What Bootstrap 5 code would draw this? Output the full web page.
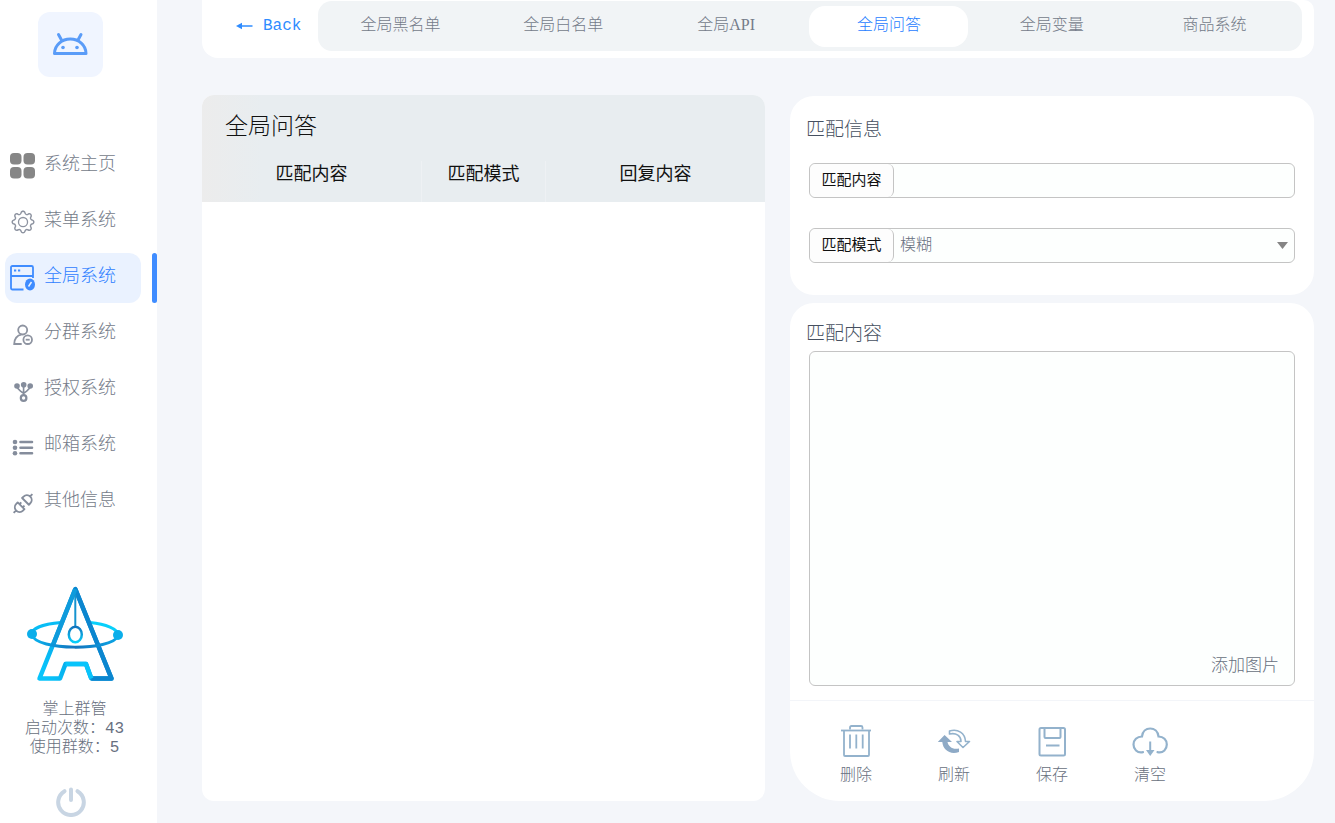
<!DOCTYPE html>
<html lang="zh-CN">
<head>
<meta charset="utf-8">
<meta name="viewport" content="width=device-width, initial-scale=1">
<title>全局问答</title>
<link href="https://cdn.jsdelivr.net/npm/bootstrap@5.3.0/dist/css/bootstrap.min.css" rel="stylesheet">
<style>
  body { background: #f4f6fa; color: #687080; font-family: "Liberation Serif", "Noto Sans CJK SC", sans-serif; font-size: 16px; font-weight: 300; }
  button, input, select, textarea { font-family: inherit; font-weight: inherit; }

  /* Sidebar */
  .side { width: 157px; background: #fff; padding: 12px 21px 6px 5px; position: relative; }
  .side-home { width: 65px; height: 65px; border-radius: 12px; background: #f0f5ff; }
  .side-nav { margin: 64px -5px 0 0; gap: 6px; }
  .side-link { height: 50px; padding: 0 4px; gap: 9px; border-radius: 12px; font-size: 18px; color: #747b89; text-decoration: none; }
  .side-link span { padding-bottom: 3px; }
  .side-link.active { background: #eaf2ff; color: #2f80ff; position: relative; }
  .side-link.active::after { content: ""; position: absolute; left: 147px; top: 0; width: 5px; height: 50px; border-radius: 3px; background: #3f8cff; }
  .side-stats { line-height: 19px; margin: 16px 0 29px; white-space: nowrap; font-family: "Liberation Mono", "Noto Sans CJK SC", monospace; }
  .plain-btn { border: 0; background: none; padding: 0; color: inherit; }

  /* Top bar */
  .main-area { padding: 0 21px 22px 45px; min-width: 0; }
  .top-bar { background: #fff; height: 58px; border-radius: 0 10px 16px 16px; padding: 1px 12px 7px 34px; }
  .back-btn { width: 82px; gap: 10px; color: #2f8cff; font: 400 16px "Liberation Mono", monospace; }
  .tab-strip { background: #f1f4f6; border-radius: 14px; padding: 5px 8px 4px 3px; gap: 4px; }
  .tab-strip .nav-link { color: #747b89; border-radius: 16px; padding: 0 0 4px; }
  .tab-strip .nav-link.active { background: #fff; color: #1f80ff; }

  /* Panels */
  .panels { display: grid; grid-template-columns: 563fr 524fr; gap: 25px; margin-top: 37px; }
  .list-panel { background: #fff; border-radius: 12px; overflow: hidden; }
  .list-head { background: linear-gradient(90deg, #ececec, #e8edf0 60px); color: #111; }
  .list-title { font-size: 23px; line-height: 30px; font-weight: 300; margin: 0; padding: 17px 23px 19px; }
  .list-head table { table-layout: fixed; font-size: 18px; line-height: 26px; color: #111; }
  .list-head th { font-weight: 400; text-align: center; padding: 0 0 15px; }
  .list-head th + th { border-left: 1px solid #eef1f4; }
  .panel-box { background: #fff; border-radius: 24px; }
  .panel-match { padding: 20px 19px 32px; }
  .panel-reply { padding-top: 17px; border-radius: 24px 24px 50px 50px; }
  .panel-title { font-size: 19px; line-height: 27px; font-weight: 300; color: #465060; margin: 0 0 0 -3px; }
  .panel-reply .panel-title { margin-left: 16px; }
  .field { height: 35px; border: 1px solid #c4c4c4; border-radius: 6px; background: #fdfffe; overflow: hidden; }
  .field-label { width: 84px; border-right: 1px solid #c4c4c4; border-radius: 6px; background: #fdfdfd; color: #111; font-size: 15px; font-weight: 400; }
  .field .form-control, .field .form-select { border: 0; border-radius: 0; padding: 0 6px 2px; font-size: 16px; font-weight: 300; color: #687080; background-color: transparent; box-shadow: none; min-width: 0; }
  .field .form-select { background-image: url("data:image/svg+xml,%3Csvg xmlns='http://www.w3.org/2000/svg' viewBox='0 0 11 7'%3E%3Cpath d='M0 0h11L5.5 7z' fill='%23858585'/%3E%3C/svg%3E"); background-size: 11px 7px; background-position: right 6px center; }
  .reply-wrap { margin: 4px 19px 14px; position: relative; }
  .reply-wrap textarea { resize: none; border: 1px solid #c4c4c4; border-radius: 6px; background: #fdfffe; }
  .add-image { position: absolute; right: 16px; bottom: 7px; font-size: 17px; line-height: 26px; }
  .tool-row { height: 101px; border-top: 1px solid #f3f5f9; padding: 22px 17px 0; }
  .tool-btn { width: 98px; line-height: 22px; }
  .tool-btn svg { display: block; margin: 0 auto 5px; stroke: #93b2cc; fill: none; stroke-width: 2; }
</style>
</head>
<body>
<div class="d-flex min-vh-100">
  <aside class="side d-flex flex-column flex-shrink-0">
    <a href="#" class="side-home d-block mx-auto" aria-label="首页">
      <svg width="65" height="65" viewBox="0 0 65 65" fill="none" stroke="#5a9cf8" stroke-width="3" stroke-linecap="round" stroke-linejoin="round"><path d="M16.500 41.500C16.500 33 24 27 32.300 27S48 33 48 41.500Z"/><path d="M20.500 22.500l3 5.500M43 22.500l-3 5.500"/><g fill="#5a9cf8" stroke="none"><circle cx="25" cy="35.500" r="1.800"/><circle cx="39" cy="35.500" r="1.800"/></g></svg>
    </a>
    <nav class="side-nav d-flex flex-column">
      <a href="#" class="side-link d-flex align-items-center">
        <svg width="26" height="26" viewBox="0 0 26 26" fill="#868686"><rect x="1" y="0" width="11.500" height="11.500" rx="4"/><rect x="14.500" y="0" width="11.500" height="11.500" rx="4"/><rect x="1" y="14" width="11.500" height="11.500" rx="4"/><rect x="14.500" y="14" width="11.500" height="11.500" rx="4"/></svg>
        <span>系统主页</span></a>
      <a href="#" class="side-link d-flex align-items-center">
        <svg width="26" height="26" viewBox="0 0 26 26" fill="#8d93a0"><g transform="translate(2.500 1.500) scale(1.440)"><path d="M8 4.400a3.600 3.600 0 1 0 0 7.200 3.600 3.600 0 0 0 0-7.200zM5.300 8a2.700 2.700 0 1 1 5.400 0 2.700 2.700 0 0 1-5.400 0z"/><path d="M9.796 1.343c-.527-1.790-3.065-1.790-3.592 0l-.094.319a.873.873 0 0 1-1.255.520l-.292-.160c-1.640-.892-3.433.902-2.540 2.541l.159.292a.873.873 0 0 1-.520 1.255l-.319.094c-1.790.527-1.790 3.065 0 3.592l.319.094a.873.873 0 0 1 .520 1.255l-.160.292c-.892 1.640.901 3.434 2.541 2.540l.292-.159a.873.873 0 0 1 1.255.520l.094.319c.527 1.790 3.065 1.790 3.592 0l.094-.319a.873.873 0 0 1 1.255-.520l.292.160c1.640.893 3.434-.902 2.540-2.541l-.159-.292a.873.873 0 0 1 .520-1.255l.319-.094c1.790-.527 1.790-3.065 0-3.592l-.319-.094a.873.873 0 0 1-.520-1.255l.160-.292c.893-1.640-.902-3.433-2.541-2.540l-.292.159a.873.873 0 0 1-1.255-.520l-.094-.319zm-2.633.283c.246-.835 1.428-.835 1.674 0l.094.319a1.873 1.873 0 0 0 2.693 1.115l.291-.160c.764-.415 1.600.420 1.184 1.185l-.159.292a1.873 1.873 0 0 0 1.116 2.692l.318.094c.835.246.835 1.428 0 1.674l-.319.094a1.873 1.873 0 0 0-1.115 2.693l.160.291c.415.764-.420 1.600-1.185 1.184l-.291-.159a1.873 1.873 0 0 0-2.693 1.116l-.094.318c-.246.835-1.428.835-1.674 0l-.094-.319a1.873 1.873 0 0 0-2.692-1.115l-.292.160c-.764.415-1.600-.420-1.184-1.185l.159-.291A1.873 1.873 0 0 0 1.945 8.930l-.319-.094c-.835-.246-.835-1.428 0-1.674l.319-.094A1.873 1.873 0 0 0 3.060 4.377l-.160-.292c-.415-.764.420-1.600 1.185-1.184l.292.159a1.873 1.873 0 0 0 2.692-1.115l.094-.319z"/></g></svg>
        <span>菜单系统</span></a>
      <a href="#" class="side-link active d-flex align-items-center" aria-current="page">
        <svg width="26" height="26" viewBox="0 0 26 26" fill="none" stroke="#3f8cff" stroke-width="1.800"><path d="M14.500 24.500H3.500Q2 24.500 2 23V2.500Q2 1 3.500 1H22.500Q24 1 24 2.500V13M2 11H24"/><path d="M5 5.500h2.200M9 5.500h2.200" stroke-width="2.200"/><ellipse cx="21" cy="19.500" rx="5" ry="6" fill="#3f8cff" stroke="none"/><path d="M19.500 21.500l3-4.500" stroke="#eaf2ff" stroke-width="1.500"/></svg>
        <span>全局系统</span></a>
      <a href="#" class="side-link d-flex align-items-center">
        <svg width="26" height="26" viewBox="0 0 26 26" fill="none" stroke="#8d93a0" stroke-width="1.800"><circle cx="13.700" cy="9" r="4.500"/><path d="M12.700 23H5.200C5.200 18 8 14 12.500 13.700"/><circle cx="18.700" cy="18.700" r="4.300"/><path d="M16.700 18.700h4"/></svg>
        <span>分群系统</span></a>
      <a href="#" class="side-link d-flex align-items-center">
        <svg width="26" height="26" viewBox="0 0 26 26" fill="none" stroke="#858d9c" stroke-width="1.600"><g fill="#858d9c" stroke="none"><circle cx="8" cy="9" r="2.800"/><circle cx="14.700" cy="7.800" r="2.800"/><circle cx="21.200" cy="9" r="2.800"/></g><circle cx="14.600" cy="21" r="2.800" stroke-width="2.200"/><path d="M14.600 8v10M7.700 9c1 4 3 4 6.900 7.500C18.500 13 20.500 13 21.500 9"/></svg>
        <span>授权系统</span></a>
      <a href="#" class="side-link d-flex align-items-center">
        <svg width="26" height="26" viewBox="0 0 26 26" fill="none" stroke="#858d9c" stroke-width="2.600" stroke-linecap="round"><path d="M11.500 9H23M11.500 14.700H23M11.500 20.300H23"/><g fill="#858d9c" stroke="none"><circle cx="6" cy="9" r="2.300"/><circle cx="6" cy="14.700" r="2.300"/><circle cx="6" cy="20.300" r="2.300"/></g></svg>
        <span>邮箱系统</span></a>
      <a href="#" class="side-link d-flex align-items-center">
        <svg width="26" height="26" viewBox="0 0 26 26" fill="none" stroke="#858d9c" stroke-width="1.900" stroke-linejoin="round"><g transform="translate(14.200 15) rotate(-45)"><path d="M-13-.5h4M-2.800-5h-2a4.600 4.600 0 0 0 0 9.500h2zM3.500-5h2a4.600 4.600 0 0 1 0 9.500h-2zM9.500-.5h4M-2.800-2.500h2.600M-2.800 2h2.600"/></g></svg>
        <span>其他信息</span></a>
    </nav>
    <div class="mt-auto pt-4 ps-2 text-center">
      <svg width="98" height="100" viewBox="0 0 98 100" fill="none" stroke-width="4" stroke-linejoin="round">
        <defs>
          <linearGradient id="frame" gradientUnits="userSpaceOnUse" x1="20" y1="90" x2="80" y2="60"><stop offset="0" stop-color="#08c4fb"/><stop offset="1" stop-color="#0784cf"/></linearGradient>
          <linearGradient id="orbit" gradientUnits="userSpaceOnUse" x1="5" y1="0" x2="93" y2="0"><stop offset="0" stop-color="#08b4f0"/><stop offset=".5" stop-color="#1273bd"/><stop offset="1" stop-color="#0ba6e6"/></linearGradient>
          <linearGradient id="bob" x1="0" y1="0" x2="0" y2="1"><stop offset="0" stop-color="#1273bd"/><stop offset="1" stop-color="#08d0fb"/></linearGradient>
        </defs>
        <path d="M35 37.500C18 39 6 43 6 49" stroke="#08bdf5" stroke-width="3"/>
        <path d="M64 37.500C80 39 92 44 92 50" stroke="#08d0fb" stroke-width="3"/>
        <path d="M49.300 4L13.500 93.500H34L39.500 79H60L65.300 93.500H85.500Z" stroke="url(#frame)" stroke-width="4.500"/>
        <path d="M65.300 93.500H85.500L49.300 4" stroke="#0b86cf" stroke-width="4.500"/>
        <path d="M65.300 93.500L60 79H39.500" stroke="#08c4fb" stroke-width="4.500"/>
        <path d="M49.300 4L27 60" stroke="#0e9bdc" stroke-width="4.500"/>
        <path d="M6 50C10 66 86 66 92 51" stroke="url(#orbit)" stroke-width="3"/>
        <path d="M49.300 10V41" stroke="#1593cf" stroke-width="2"/>
        <ellipse cx="49.300" cy="49.500" rx="6.500" ry="7.800" stroke="url(#bob)" stroke-width="2.500"/>
        <circle cx="6" cy="49" r="5" fill="#0baeea"/><circle cx="92" cy="50" r="5" fill="#0baeea"/>
      </svg>
      <div class="side-stats d-flex flex-column align-items-center"><span>掌上群管</span><span>启动次数：43</span><span>使用群数：5</span></div>
    </div>
    <button type="button" class="plain-btn mx-auto d-block lh-1" aria-label="退出">
      <svg class="d-block" width="30" height="30" viewBox="0 0 30 30" fill="none" stroke="#c8d5e3" stroke-width="4" stroke-linecap="round"><path d="M8.500 4.200A12.800 12.800 0 1 0 21.500 4.200M15 2.500V13"/></svg>
    </button>
  </aside>

  <main class="main-area flex-grow-1 d-flex flex-column">
    <header class="top-bar d-flex">
      <button type="button" class="plain-btn back-btn d-flex align-items-center">
        <svg width="17" height="8" viewBox="0 0 17 8"><path d="M5 4H16.500" stroke="#2f8cff" stroke-width="1.500"/><path d="M0 4L6 .8V7.200Z" fill="#2f8cff"/></svg>Back
      </button>
      <nav class="tab-strip nav nav-fill flex-grow-1 flex-nowrap align-items-stretch">
        <a class="nav-link d-flex align-items-center justify-content-center w-100" href="#">全局黑名单</a>
        <a class="nav-link d-flex align-items-center justify-content-center w-100" href="#">全局白名单</a>
        <a class="nav-link d-flex align-items-center justify-content-center w-100" href="#">全局API</a>
        <a class="nav-link active d-flex align-items-center justify-content-center w-100" href="#" aria-current="page">全局问答</a>
        <a class="nav-link d-flex align-items-center justify-content-center w-100" href="#">全局变量</a>
        <a class="nav-link d-flex align-items-center justify-content-center w-100" href="#">商品系统</a>
      </nav>
    </header>

    <div class="panels flex-grow-1">
      <section class="list-panel">
        <div class="list-head">
          <h1 class="list-title">全局问答</h1>
          <table class="w-100">
            <colgroup><col style="width:39%"><col style="width:22%"><col style="width:39%"></colgroup>
            <thead><tr><th scope="col">匹配内容</th><th scope="col">匹配模式</th><th scope="col">回复内容</th></tr></thead>
            <tbody></tbody>
          </table>
        </div>
      </section>

      <div class="d-flex flex-column gap-2" style="padding-top:1px">
        <section class="panel-box panel-match">
          <h2 class="panel-title">匹配信息</h2>
          <div class="field d-flex" style="margin-top:20px">
            <label class="field-label d-flex align-items-center justify-content-center flex-shrink-0" for="keyword">匹配内容</label>
            <input class="form-control" id="keyword" type="text">
          </div>
          <div class="field d-flex" style="margin-top:30px">
            <label class="field-label d-flex align-items-center justify-content-center flex-shrink-0" for="mode">匹配模式</label>
            <select class="form-select" id="mode"><option>模糊</option><option>精确</option></select>
          </div>
        </section>
        <section class="panel-box panel-reply flex-grow-1 d-flex flex-column">
          <h2 class="panel-title"><label for="reply">匹配内容</label></h2>
          <div class="reply-wrap flex-grow-1 d-flex">
            <textarea class="form-control" id="reply"></textarea>
            <button type="button" class="plain-btn add-image">添加图片</button>
          </div>
          <div class="tool-row d-flex align-items-start">
            <button type="button" class="plain-btn tool-btn">
              <svg width="36" height="36" viewBox="0 0 36 36"><path d="M3 7.500H33" stroke-width="1.800"/><path d="M6 7.500V32Q6 33 7 33H30Q31 33 31 32V7.500M12 6.500V4.500Q12 3 13.500 3H23Q24.500 3 24.500 4.500V6.500M12 11.500V25.500M18.300 11.500V25.500M24.700 11.500V25.500" stroke-width="1.800"/></svg>删除</button>
            <button type="button" class="plain-btn tool-btn">
              <svg width="36" height="36" viewBox="0 0 36 36"><path d="M8.600 12L16 19H11.500C12.500 23.500 16.500 27 23 25.500V29C14 32 7 27 6.300 19H1.800Z" fill="#8eaac6" stroke="none"/><path d="M13.500 8C22 5.500 29 10 29.500 18.500H33.500L27 24.500L21 18.500H25C25 13 20.500 9.500 13.500 11Z" stroke-width="1.600" stroke-linejoin="round"/></svg>刷新</button>
            <button type="button" class="plain-btn tool-btn">
              <svg width="36" height="36" viewBox="0 0 36 36"><rect x="5.500" y="5" width="25.500" height="27.500" rx="1.500"/><path d="M10.500 5V14Q10.500 15 11.500 15H25.500Q26.500 15 26.500 14V5M12 22.500H25.500"/></svg>保存</button>
            <button type="button" class="plain-btn tool-btn">
              <svg width="36" height="36" viewBox="0 0 36 36"><path d="M11 29.200C5 30.500 1.500 26 1.500 21.500C1.500 17 5 13.500 10 13.500C10.500 8.500 14 5.500 18.200 5.500S26 8.500 26.500 13.500C31.500 13.500 34.800 17 34.800 21.500C34.800 26 31.500 30.500 25.500 29.200" stroke-width="2.200" stroke-linecap="round"/><path d="M18.200 18.500V28"/><path d="M14 27H22.500L18.200 33Z" fill="#93b2cc" stroke="none"/></svg>清空</button>
          </div>
        </section>
      </div>
    </div>
  </main>
</div>
<script src="https://cdn.jsdelivr.net/npm/bootstrap@5.3.0/dist/js/bootstrap.bundle.min.js"></script>
</body>
</html>
